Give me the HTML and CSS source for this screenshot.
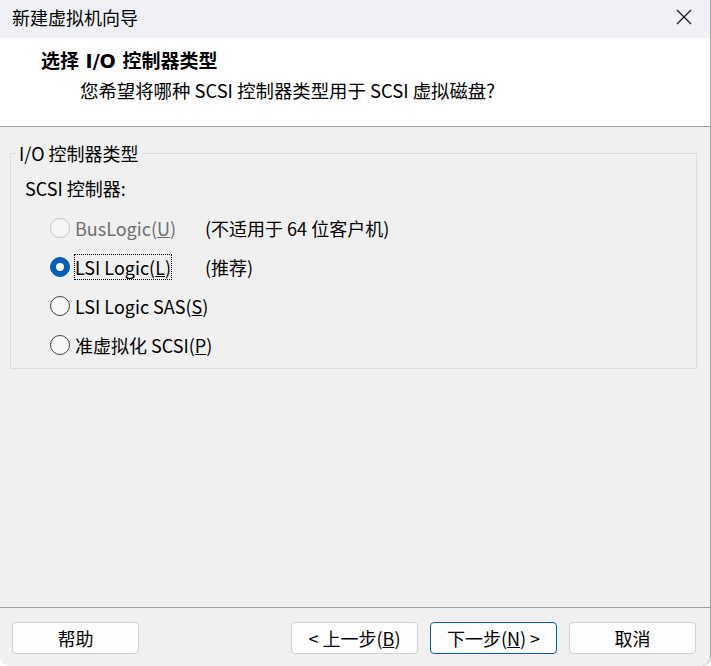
FILE: index.html
```html
<!DOCTYPE html>
<html lang="zh-CN">
<head>
    <meta charset="UTF-8">
    <meta name="viewport" content="width=device-width, initial-scale=1.0">
    <title>新建虚拟机向导</title>
    <link rel="stylesheet" href="styles.css">
</head>
<body>

<div class="window">
    <div class="titlebar">
        <span class="title">新建虚拟机向导</span>
        <svg class="close" width="16" height="16" viewBox="0 0 16 16">
            <path d="M1 1 L15 15 M15 1 L1 15" stroke="#1a1a1a" stroke-width="1.3" fill="none"/>
        </svg>
    </div>

    <div class="header">
        <div class="heading">选择 I/O 控制器类型</div>
        <div class="subheading">您希望将哪种 SCSI 控制器类型用于 SCSI 虚拟磁盘?</div>
    </div>

    <div class="content">
        <fieldset class="group">
            <legend>I/O 控制器类型</legend>
            <div class="group-label">SCSI 控制器:</div>

            <div class="options">
                <div class="option disabled">
                    <span class="radio"></span>
                    <span class="label">BusLogic(<u>U</u>)</span>
                    <span class="note">(不适用于 64 位客户机)</span>
                </div>
                <div class="option">
                    <span class="radio checked"></span>
                    <span class="label"><span class="focus">LSI Logic(<u>L</u>)</span></span>
                    <span class="note">(推荐)</span>
                </div>
                <div class="option">
                    <span class="radio"></span>
                    <span class="label">LSI Logic SAS(<u>S</u>)</span>
                    <span class="note"></span>
                </div>
                <div class="option">
                    <span class="radio"></span>
                    <span class="label">准虚拟化 SCSI(<u>P</u>)</span>
                    <span class="note"></span>
                </div>
            </div>
        </fieldset>
    </div>

    <div class="footer">
        <button class="btn">帮助</button>
        <div class="spacer"></div>
        <button class="btn">&lt; 上一步(<u>B</u>)</button>
        <button class="btn primary">下一步(<u>N</u>) &gt;</button>
        <button class="btn">取消</button>
    </div>
</div>

</body>
</html>
```

FILE: styles.css
```css
html, body {
    margin: 0;
    padding: 0;
    background-color: #ffffff;
}
body {
    font-family: "Noto Sans CJK SC", "Liberation Sans", sans-serif;
    font-size: 18px;
    color: #000;
}
.window {
    width: 710px;
    height: 666px;
    display: flex;
    flex-direction: column;
    background-color: #f0f0f0;
    border-right: 1px solid #a8a8a8;
    border-bottom-left-radius: 9px;
    border-bottom-right-radius: 9px;
    overflow: hidden;
}
.titlebar {
    height: 38px;
    flex: none;
    display: flex;
    align-items: center;
    justify-content: space-between;
    padding: 0 18px 0 12px;
    background-color: #eff1f6;
}
.title {
    font-size: 18px;
    margin-top: -4px;
}
.close {
    margin-top: -4px;
}
.header {
    height: 89px;
    flex: none;
    background-color: #fff;
    border-bottom: 1px solid #a0a0a0;
    box-sizing: border-box;
    padding-top: 10px;
}
.heading {
    font-family: "DejaVu Sans", "Noto Sans CJK SC", sans-serif;
    font-weight: bold;
    font-size: 19px;
    margin-left: 41px;
    line-height: 26px;
}
.subheading {
    font-size: 18.4px;
    margin-left: 80px;
    margin-top: 3px;
    line-height: 26px;
}
.content {
    flex: 1;
    padding: 13px 13px 0 10px;
}
.group {
    margin: 0;
    padding: 0;
    border: 1px solid #dcdcdc;
    height: 227px;
}
.group legend {
    margin-left: 5px;
    padding: 0 3px 0 3px;
    line-height: 26px;
}
.group-label {
    margin: 9px 0 0 14px;
    line-height: 26px;
}
.options {
    margin-top: 14px;
    margin-left: 39px;
    display: flex;
    flex-direction: column;
    gap: 13px;
}
.option {
    display: flex;
    align-items: center;
    height: 26px;
    line-height: 26px;
}
.radio {
    width: 18px;
    height: 18px;
    border: 1px solid #444;
    border-radius: 50%;
    background-color: #f7f7f7;
    flex: none;
    position: relative;
}
.radio.checked {
    background-color: #005fb8;
    border-color: #005fb8;
}
.radio.checked::after {
    content: "";
    position: absolute;
    left: 5px;
    top: 5px;
    width: 8px;
    height: 8px;
    border-radius: 50%;
    background-color: #fff;
}
.label {
    margin-left: 5px;
    width: 130px;
    flex: none;
    white-space: nowrap;
}
.focus {
    outline: 1px dotted #000;
    outline-offset: -1px;
    padding: 0 1px;
    margin-left: -1px;
}
.note {
    white-space: nowrap;
}
.disabled .radio {
    border-color: #c6c6c6;
    background-color: #f5f5f5;
}
.disabled .label {
    color: #6f6f6f;
}
.footer {
    flex: none;
    box-sizing: border-box;
    height: 59px;
    border-top: 1px solid #a0a0a0;
    display: flex;
    align-items: flex-start;
    gap: 12px;
    padding: 14px 14px 0 12px;
}
.spacer {
    flex: 1;
}
.btn {
    width: 127px;
    height: 32px;
    font-family: "Noto Sans CJK SC", "Liberation Sans", sans-serif;
    font-size: 18px;
    line-height: 1;
    color: #000;
    background-color: #fdfdfd;
    border: 1px solid #d0d0d0;
    border-radius: 4px;
    padding: 0;
}
.btn.primary {
    border-color: #005fb8;
}
```
